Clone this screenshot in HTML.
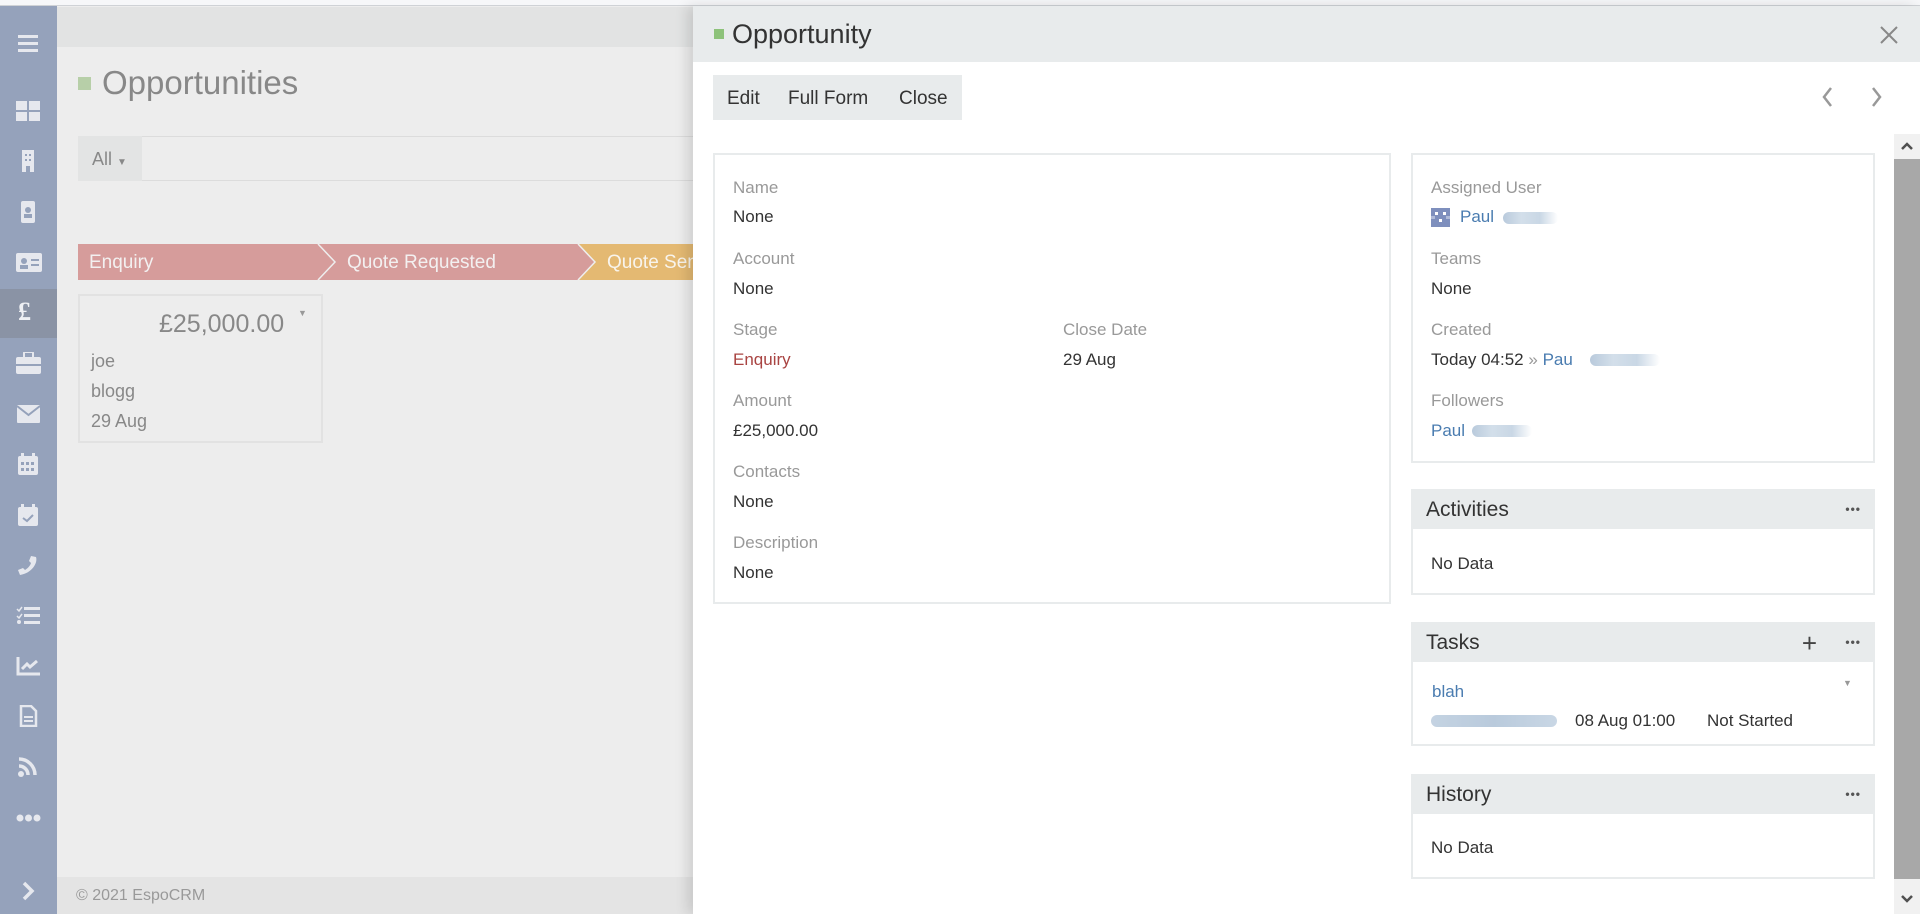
<!DOCTYPE html>
<html><head><meta charset="utf-8"><style>
*{box-sizing:border-box;margin:0;padding:0}
body{width:1920px;height:914px;overflow:hidden;position:relative;font-family:"Liberation Sans",sans-serif;background:#ededed}
.a{position:absolute}
.sb{left:0;top:6px;width:57px;height:908px;background:#95a2bb}
.ic{position:absolute;left:16px;width:25px;height:22px;color:#e6e8ee}
.lbl{position:absolute;font-size:17px;color:#999;line-height:20px;margin-top:2px}
.val{position:absolute;font-size:17px;color:#333;line-height:20px;margin-top:2px}
.lnk{color:#4a7cb0}
.ph{position:absolute;left:1411px;width:464px;height:40px;background:#e8ebec;font-size:21px;color:#333;line-height:42px;padding-left:15px}
.pb{position:absolute;left:1411px;width:464px;background:#fff;border:2px solid #e8ebec;border-top:none}
.dots{position:absolute;right:14px;top:-1px;font-size:12px;letter-spacing:1px;color:#555;font-weight:bold}
.blur{position:absolute;height:12px;border-radius:6px;background:linear-gradient(90deg,#b9cadc,#d3dfea,#c9d7e5,rgba(220,230,240,0))}
</style></head><body>
<div class="a" style="left:0;top:0;width:1920px;height:6px;background:#f6f7f9;border-bottom:1px solid #cfd2d6"></div>
<div class="sb a"></div>
<div class="a" style="left:0;top:289px;width:57px;height:49px;background:#8a93a5"></div>
<div class="ic" style="top:34px"><svg width="25" height="20"><rect x="2" y="1" width="20" height="3" fill="#e6e8ee"/><rect x="2" y="8" width="20" height="3" fill="#e6e8ee"/><rect x="2" y="15" width="20" height="3" fill="#e6e8ee"/></svg></div>
<div class="ic" style="top:101px"><svg width="25" height="20"><rect x="0" y="0" width="11" height="9" fill="#e6e8ee"/><rect x="13" y="0" width="11" height="9" fill="#e6e8ee"/><rect x="0" y="11" width="11" height="9" fill="#e6e8ee"/><rect x="13" y="11" width="11" height="9" fill="#e6e8ee"/></svg></div>
<div class="ic" style="top:150px"><svg width="25" height="22"><rect x="6" y="0" width="12" height="22" fill="#e6e8ee"/><rect x="9" y="4" width="2" height="2" fill="#95a2bb"/><rect x="13" y="4" width="2" height="2" fill="#95a2bb"/><rect x="9" y="9" width="2" height="2" fill="#95a2bb"/><rect x="13" y="9" width="2" height="2" fill="#95a2bb"/><rect x="10" y="16" width="4" height="6" fill="#95a2bb"/></svg></div>
<div class="ic" style="top:201px"><svg width="25" height="22"><rect x="5" y="0" width="14" height="22" rx="2" fill="#e6e8ee"/><circle cx="12" cy="9" r="3" fill="#95a2bb"/><rect x="8" y="13" width="8" height="4" fill="#95a2bb"/></svg></div>
<div class="ic" style="top:253px"><svg width="26" height="20"><rect x="0" y="0" width="26" height="19" rx="2" fill="#e6e8ee"/><circle cx="8" cy="8" r="3" fill="#95a2bb"/><rect x="4" y="12" width="8" height="4" fill="#95a2bb"/><rect x="15" y="6" width="8" height="2" fill="#95a2bb"/><rect x="15" y="11" width="8" height="2" fill="#95a2bb"/></svg></div>
<div class="a" style="left:18px;top:297px;font-size:26px;font-weight:bold;color:#eef0f4;font-family:'Liberation Serif',serif">£</div>
<div class="ic" style="top:352px"><svg width="25" height="22"><rect x="8" y="0" width="9" height="6" rx="1" fill="none" stroke="#e6e8ee" stroke-width="2"/><rect x="0" y="5" width="25" height="17" rx="2" fill="#e6e8ee"/><rect x="0" y="12" width="25" height="2" fill="#95a2bb"/></svg></div>
<div class="ic" style="top:404px"><svg width="25" height="20"><rect x="1" y="1" width="23" height="18" rx="1" fill="#e6e8ee"/><path d="M1 2 L12.5 11 L24 2" stroke="#95a2bb" stroke-width="2" fill="none"/></svg></div>
<div class="ic" style="top:453px"><svg width="25" height="22"><rect x="2" y="3" width="20" height="19" rx="2" fill="#e6e8ee"/><rect x="5" y="0" width="3" height="5" fill="#e6e8ee"/><rect x="16" y="0" width="3" height="5" fill="#e6e8ee"/><g fill="#95a2bb"><rect x="5" y="9" width="3" height="3"/><rect x="10" y="9" width="3" height="3"/><rect x="15" y="9" width="3" height="3"/><rect x="5" y="15" width="3" height="3"/><rect x="10" y="15" width="3" height="3"/><rect x="15" y="15" width="3" height="3"/></g></svg></div>
<div class="ic" style="top:504px"><svg width="25" height="22"><rect x="2" y="3" width="20" height="19" rx="2" fill="#e6e8ee"/><rect x="5" y="0" width="3" height="5" fill="#e6e8ee"/><rect x="16" y="0" width="3" height="5" fill="#e6e8ee"/><path d="M7 14 L11 17 L17 11" stroke="#95a2bb" stroke-width="2" fill="none"/></svg></div>
<div class="ic" style="top:555px"><svg width="25" height="22"><path d="M20 2 C22 8 16 18 4 20 L2 15 L7 13 L9 15 C12 13 14 11 15 8 L13 6 L15 1 Z" fill="#e6e8ee"/></svg></div>
<div class="ic" style="top:606px"><svg width="25" height="20"><g fill="#e6e8ee"><rect x="8" y="1" width="16" height="3"/><rect x="8" y="8" width="16" height="3"/><rect x="8" y="15" width="16" height="3"/><circle cx="3" cy="16" r="2"/></g><path d="M1 3 L3 5 L6 1 M1 10 L3 12 L6 8" stroke="#e6e8ee" stroke-width="1.5" fill="none"/></svg></div>
<div class="ic" style="top:656px"><svg width="25" height="20"><path d="M2 1 V18 H24" stroke="#e6e8ee" stroke-width="3" fill="none"/><path d="M6 13 L11 8 L14 11 L21 5" stroke="#e6e8ee" stroke-width="3" fill="none"/></svg></div>
<div class="ic" style="top:705px"><svg width="25" height="22"><path d="M5 1 H15 L20 6 V21 H5 Z" fill="none" stroke="#e6e8ee" stroke-width="2.5"/><rect x="8" y="11" width="9" height="2" fill="#e6e8ee"/><rect x="8" y="15" width="9" height="2" fill="#e6e8ee"/></svg></div>
<div class="ic" style="top:756px"><svg width="25" height="22"><circle cx="5" cy="18" r="3" fill="#e6e8ee"/><path d="M3 10 A9 9 0 0 1 12 19 M3 3 A16 16 0 0 1 19 19" stroke="#e6e8ee" stroke-width="3.5" fill="none"/></svg></div>
<div class="ic" style="top:810px"><svg width="25" height="10"><circle cx="4" cy="5" r="3.5" fill="#e6e8ee"/><circle cx="12.5" cy="5" r="3.5" fill="#e6e8ee"/><circle cx="21" cy="5" r="3.5" fill="#e6e8ee"/></svg></div>
<div class="ic" style="top:880px"><svg width="25" height="22"><path d="M8 3 L16 11 L8 19" stroke="#e6e8ee" stroke-width="3.5" fill="none"/></svg></div>
<div class="a" style="left:57px;top:7px;width:640px;height:40px;background:#e2e3e3"></div>
<div class="a" style="left:78px;top:77px;width:13px;height:13px;background:#b7cfa8"></div>
<div class="a" style="left:102px;top:64px;font-size:33px;color:#888">Opportunities</div>
<div class="a" style="left:78px;top:136px;width:620px;height:45px;border:1px solid #dcdcdc;background:#ededed"></div>
<div class="a" style="left:78px;top:136px;width:64px;height:45px;background:#e3e4e4;font-size:18px;color:#888;line-height:47px;padding-left:14px">All <span style="font-size:10px">▼</span></div>
<div class="a" style="left:78px;top:244px;width:620px;height:36px;background:#e4b972"></div>
<svg class="a" style="left:78px;top:244px" width="620" height="36"><polygon points="0,0 500,0 517,18 500,36 0,36" fill="#d69c9b"/><polyline points="240,0 257,18 240,36" stroke="#eee" stroke-width="1.5" fill="none"/><polyline points="500,0 517,18 500,36" stroke="#eee" stroke-width="1.5" fill="none"/></svg>
<div class="a" style="left:89px;top:252px;font-size:19px;color:#f3f0f0">Enquiry</div>
<div class="a" style="left:347px;top:252px;font-size:19px;color:#f3f0f0">Quote Requested</div>
<div class="a" style="left:607px;top:252px;font-size:19px;color:#f8f4ec">Quote Sent</div>
<div class="a" style="left:78px;top:294px;width:245px;height:149px;border:2px solid #e2e2e2;background:#ededed"></div>
<div class="a" style="left:159px;top:310px;font-size:25px;color:#888">£25,000.00</div>
<div class="a" style="left:298px;top:308px;font-size:9px;color:#999">▼</div>
<div class="a" style="left:91px;top:346px;font-size:18px;color:#888;line-height:30px">joe<br>blogg<br>29 Aug</div>
<div class="a" style="left:57px;top:877px;width:640px;height:37px;background:#e4e4e4"></div>
<div class="a" style="left:76px;top:887px;font-size:16px;color:#999">© 2021 EspoCRM</div>
<div class="a" style="left:693px;top:6px;width:1227px;height:908px;background:#fff;box-shadow:-6px 0 12px rgba(0,0,0,0.12)"></div>
<div class="a" style="left:693px;top:6px;width:1227px;height:56px;background:#e8ebec"></div>
<div class="a" style="left:714px;top:29px;width:10px;height:10px;background:#8dc27a"></div>
<div class="a" style="left:732px;top:19px;font-size:27px;color:#333">Opportunity</div>
<svg class="a" style="left:1879px;top:25px" width="20" height="20"><path d="M2 2 L18 18 M18 2 L2 18" stroke="#888" stroke-width="2"/></svg>
<div class="a" style="left:713px;top:75px;width:249px;height:45px;background:#e8ebec"></div>
<div class="a" style="left:727px;top:88px;font-size:19px;color:#333">Edit</div>
<div class="a" style="left:788px;top:88px;font-size:19px;color:#333">Full Form</div>
<div class="a" style="left:899px;top:88px;font-size:19px;color:#333">Close</div>
<svg class="a" style="left:1820px;top:86px" width="80" height="22"><path d="M11 2 L4 11 L11 20" stroke="#999" stroke-width="2.5" fill="none"/><path d="M53 2 L60 11 L53 20" stroke="#999" stroke-width="2.5" fill="none"/></svg>
<div class="a" style="left:713px;top:153px;width:678px;height:451px;border:2px solid #e8ebec"></div>
<div class="lbl" style="left:733px;top:176px">Name</div><div class="val" style="left:733px;top:205px">None</div>
<div class="lbl" style="left:733px;top:247px">Account</div><div class="val" style="left:733px;top:277px">None</div>
<div class="lbl" style="left:733px;top:318px">Stage</div><div class="val" style="left:733px;top:348px;color:#a94442">Enquiry</div>
<div class="lbl" style="left:1063px;top:318px">Close Date</div><div class="val" style="left:1063px;top:348px">29 Aug</div>
<div class="lbl" style="left:733px;top:389px">Amount</div><div class="val" style="left:733px;top:419px">£25,000.00</div>
<div class="lbl" style="left:733px;top:460px">Contacts</div><div class="val" style="left:733px;top:490px">None</div>
<div class="lbl" style="left:733px;top:531px">Description</div><div class="val" style="left:733px;top:561px">None</div>
<div class="a" style="left:1411px;top:153px;width:464px;height:310px;border:2px solid #e8ebec"></div>
<div class="lbl" style="left:1431px;top:176px">Assigned User</div>
<svg class="a" style="left:1431px;top:208px" width="19" height="19"><rect width="19" height="19" fill="#7e8fbd"/><rect x="4" y="4" width="3" height="3" fill="#fff"/><rect x="12" y="4" width="3" height="3" fill="#fff"/><rect x="0" y="8" width="4" height="3" fill="#b0bbd8"/><rect x="15" y="8" width="4" height="3" fill="#b0bbd8"/><rect x="8" y="11" width="3" height="3" fill="#fff"/></svg>
<div class="val lnk" style="left:1460px;top:205px">Paul</div><div class="blur" style="left:1503px;top:212px;width:55px"></div>
<div class="lbl" style="left:1431px;top:247px">Teams</div><div class="val" style="left:1431px;top:277px">None</div>
<div class="lbl" style="left:1431px;top:318px">Created</div><div class="val" style="left:1431px;top:348px">Today 04:52 <span style="color:#999">»</span> <span class="lnk">Pau</span></div><div class="blur" style="left:1590px;top:354px;width:70px"></div>
<div class="lbl" style="left:1431px;top:389px">Followers</div><div class="val lnk" style="left:1431px;top:419px">Paul</div><div class="blur" style="left:1472px;top:425px;width:60px"></div>
<div class="ph" style="top:489px">Activities<span class="dots">•••</span></div>
<div class="pb" style="top:529px;height:66px"></div>
<div class="val" style="left:1431px;top:552px">No Data</div>
<div class="ph" style="top:622px">Tasks<span class="a" style="right:58px;top:0;font-size:26px;color:#444">+</span><span class="dots">•••</span></div>
<div class="pb" style="top:662px;height:84px"></div>
<div class="val lnk" style="left:1432px;top:680px">blah</div>
<div class="a" style="left:1843px;top:678px;font-size:9px;color:#999">▼</div>
<div class="blur" style="left:1431px;top:715px;width:126px;background:linear-gradient(90deg,#c4d3e2,#b9cadc,#c9d7e5)"></div>
<div class="val" style="left:1575px;top:709px">08 Aug 01:00</div>
<div class="val" style="left:1707px;top:709px">Not Started</div>
<div class="ph" style="top:774px">History<span class="dots">•••</span></div>
<div class="pb" style="top:814px;height:65px"></div>
<div class="val" style="left:1431px;top:836px">No Data</div>
<div class="a" style="left:1894px;top:134px;width:26px;height:780px;background:#f1f1f1"></div>
<div class="a" style="left:1894px;top:159px;width:26px;height:720px;background:#a8a8a8"></div>
<svg class="a" style="left:1900px;top:140px" width="14" height="12"><path d="M2 9 L7 4 L12 9" stroke="#505050" stroke-width="2.5" fill="none"/></svg>
<svg class="a" style="left:1900px;top:893px" width="14" height="12"><path d="M2 3 L7 8 L12 3" stroke="#505050" stroke-width="2.5" fill="none"/></svg>
</body></html>
